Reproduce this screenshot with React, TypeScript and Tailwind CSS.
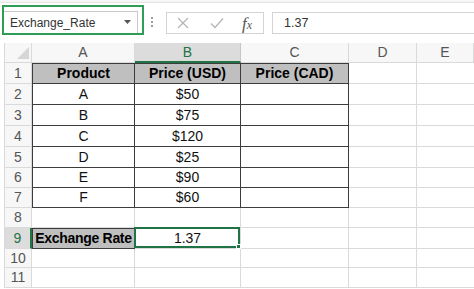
import React from "react";

type Row = {
  n: number;
  h: string;
  cells: string[];
};

const GRID = "border-[#dadada]";
const DARK = "border-[#3c3c3c]";

const rows: Row[] = [
  { n: 1, h: "h-[21px]", cells: ["Product", "Price (USD)", "Price (CAD)"] },
  { n: 2, h: "h-[21px]", cells: ["A", "$50", ""] },
  { n: 3, h: "h-[21px]", cells: ["B", "$75", ""] },
  { n: 4, h: "h-[21px]", cells: ["C", "$120", ""] },
  { n: 5, h: "h-[21px]", cells: ["D", "$25", ""] },
  { n: 6, h: "h-[20px]", cells: ["E", "$90", ""] },
  { n: 7, h: "h-[20px]", cells: ["F", "$60", ""] },
  { n: 8, h: "h-[20px]", cells: ["", "", ""] },
  { n: 9, h: "h-[21px]", cells: ["Exchange Rate", "1.37", ""] },
  { n: 10, h: "h-[19px]", cells: ["", "", ""] },
  { n: 11, h: "h-[20px]", cells: ["", "", ""] },
];

const cols = ["w-[103px]", "w-[106px]", "w-[108px]"];

const FormulaBar = () => (
  <div className="h-[43px] relative bg-white">
    <div className="h-[3px] border-b border-[#e3e3e3] bg-[#f7f7f7]" />
    <div className="flex items-start">
      {/* name box */}
      <div className="ml-[2px] mt-[2px] w-[142px] h-[30px] border-2 border-[#2f9e55] flex flex-col">
        <div className="mt-[4px] mr-[4px] h-[22px] border border-[#c8c8c8] border-l-0 border-b-0 flex items-center justify-between pl-[6px] pr-[6px]">
          <span className="text-[12px] text-[#333]">Exchange_Rate</span>
          <svg width="7" height="4" viewBox="0 0 7 4" className="mb-[1px]">
            <polygon points="0,0 7,0 3.5,4" fill="#555" />
          </svg>
        </div>
      </div>
      {/* dots */}
      <div className="ml-[7px] mt-[14px] flex flex-col gap-[2px]">
        <span className="w-[2px] h-[2px] bg-[#9a9a9a]" />
        <span className="w-[2px] h-[2px] bg-[#9a9a9a]" />
        <span className="w-[2px] h-[2px] bg-[#9a9a9a]" />
      </div>
      {/* buttons */}
      <div className="ml-[13px] mt-[9px] w-[98px] h-[22px] border border-[#d4d4d4] flex items-center">
        <svg width="12" height="12" viewBox="0 0 12 12" className="ml-[10px]">
          <path d="M1 1 L11 11 M11 1 L1 11" stroke="#b5b5b5" strokeWidth="1.2" />
        </svg>
        <svg width="14" height="12" viewBox="0 0 14 12" className="ml-[21px]">
          <path d="M1 6.5 L5 10.5 L13 1.5" stroke="#b5b5b5" strokeWidth="1.3" fill="none" />
        </svg>
        <span
          className="ml-[18px] text-[17px] italic text-[#555] leading-none"
          style={{ fontFamily: '"Liberation Serif", "DejaVu Serif", serif' }}
        >
          f<span className="text-[12px]">x</span>
        </span>
      </div>
      {/* input */}
      <div className="ml-[8px] mt-[9px] flex-1 h-[22px] border border-[#d4d4d4] border-r-0 flex items-center pl-[11px]">
        <span className="text-[12.5px] text-[#333]">1.37</span>
      </div>
    </div>
  </div>
);

const ColumnHeaders = () => (
  <div className="flex h-[20px] bg-[#f7f7f7]">
    <div className={`w-[28px] border-l border-r border-b ${GRID} relative`}>
      <svg width="12" height="12" viewBox="0 0 12 12" className="absolute right-[2px] bottom-[3px]">
        <polygon points="12,0 12,12 0,12" fill="#d6d6d6" />
      </svg>
    </div>
    {["A", "B", "C", "D", "E"].map((c, i) => {
      const w = ["w-[103px]", "w-[106px]", "w-[108px]", "w-[68px]", "flex-1"][i];
      const sel = c === "B";
      return (
        <div
          key={c}
          className={`${w} flex items-center justify-center text-[14px] border-r ${
            sel
              ? "bg-[#dcdcdc] text-[#217346] border-b-2 border-b-[#217346] border-r-[#c6c6c6]"
              : `text-[#555] border-b ${GRID}`
          }`}
        >
          {c}
        </div>
      );
    })}
  </div>
);

const Sheet = () => (
  <div>
    {rows.map((r) => {
      const rowSel = r.n === 9;
      return (
        <div key={r.n} className={`flex ${r.h}`}>
          <div
            className={`w-[28px] flex items-center justify-center text-[14px] border-l border-b ${GRID} ${
              rowSel
                ? "bg-[#dcdcdc] text-[#217346] border-r-2 border-r-[#217346]"
                : `bg-[#f7f7f7] text-[#555] border-r`
            }`}
          >
            {r.n}
          </div>
          {r.cells.map((v, i) => {
            const inTable = r.n <= 7;
            const head = r.n === 1;
            const label = r.n === 9 && i === 0;
            const selected = r.n === 9 && i === 1;
            let cls = `border-r border-b ${GRID}`;
            if (inTable) {
              cls = `border-r border-b ${DARK}`;
              if (head) cls += " border-t border-t-[#3c3c3c] bg-[#bfbfbf] font-bold text-[13px]";
              if (i === 0) cls += " border-l border-l-[#3c3c3c]";
            }
            if (label) {
              cls = `border border-[#3c3c3c] bg-[#bfbfbf] font-bold text-[12px] tracking-[-0.3px]`;
            }
            return (
              <div
                key={i}
                className={`${cols[i]} relative flex items-center justify-center text-[14px] text-black ${cls}`}
              >
                {selected && (
                  <div className="absolute -top-[1px] -left-[1px] right-0 bottom-0 border-2 border-[#217346] pointer-events-none">
                    <span className="absolute -right-[3px] -bottom-[3px] w-[5px] h-[5px] bg-[#217346] border border-white" />
                  </div>
                )}
                <span className={head || label ? "" : "text-[#111]"}>{v}</span>
              </div>
            );
          })}
          <div className={`w-[68px] border-r border-b ${GRID}`} />
          <div className={`flex-1 border-b ${GRID}`} />
        </div>
      );
    })}
  </div>
);

export default function App() {
  return (
    <div
      className="w-[474px] h-[289px] overflow-hidden bg-white"
      style={{ fontFamily: '"Liberation Sans", Arial, sans-serif' }}
    >
      <FormulaBar />
      <div className="pl-[4px]">
        <ColumnHeaders />
        <Sheet />
      </div>
    </div>
  );
}
